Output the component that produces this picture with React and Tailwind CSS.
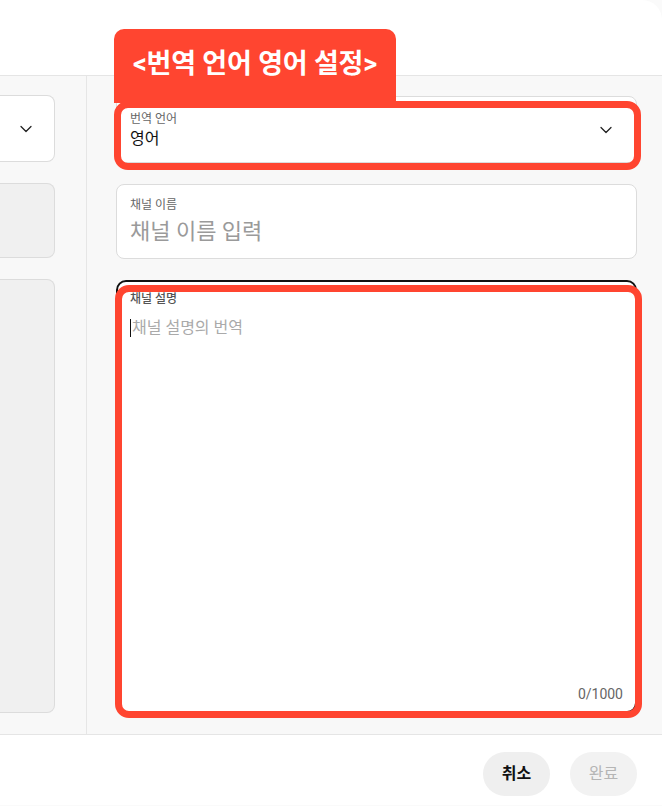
import { ChevronDown } from "lucide-react";

const font = { fontFamily: "Roboto, 'Noto Sans CJK KR', sans-serif" };

// 주석용 빨간 테두리 박스
const Highlight = ({ className }) => (
  <div
    className={`pointer-events-none absolute rounded-[14px] border-[7px] border-[#ff4530] ${className}`}
  />
);

const App = () => {
  return (
    <div className="relative h-[806px] w-[662px] overflow-hidden bg-[#fafafa]" style={font}>
      {/* 상단 헤더 영역 */}
      <div className="h-[76px] rounded-tr-[20px] border-b border-[#e5e5e5] bg-white" />

      {/* 본문: 원문 / 번역 두 컬럼 */}
      <div className="flex h-[659px] border-b border-[#e5e5e5] bg-[#f8f8f8]">
        {/* 원문 컬럼 (잘려 보이는 부분) */}
        <div className="flex w-[87px] shrink-0 flex-col gap-[21px] border-r border-[#e6e6e6] pr-[31px] pt-[19px] pb-[21px]">
          <div className="flex h-[67px] items-center justify-end rounded-r-lg border border-l-0 border-[#dcdcdc] bg-white pr-[18px]">
            <ChevronDown size={20} strokeWidth={1.5} className="text-[#222]" />
          </div>
          <div className="h-[75px] rounded-r-lg border border-l-0 border-[#dcdcdc] bg-[#f0f0f0]" />
          <div className="flex-1 rounded-r-lg border border-l-0 border-[#dcdcdc] bg-[#f0f0f0]" />
        </div>

        {/* 번역 컬럼 */}
        <div className="flex flex-1 flex-col gap-[21px] pl-[29px] pr-[25px] pt-[20px] pb-[21px]">
          <div className="relative flex h-[67px] items-center justify-between rounded-lg border border-[#dcdcdc] bg-white pl-[13px] pr-[20px]">
            <div className="pt-[1px]">
              <div className="text-[12px] leading-[16px] text-[#666]">번역 언어</div>
              <div className="mt-[1px] text-[16px] leading-[22px] text-[#111]">영어</div>
            </div>
            <ChevronDown size={20} strokeWidth={1.5} className="text-[#222]" />
            <Highlight className="-left-[3px] top-[4px] -right-[5px] -bottom-[8px]" />
          </div>

          <div className="flex h-[75px] flex-col justify-center rounded-lg border border-[#dcdcdc] bg-white px-[13px]">
            <div className="text-[12px] leading-[16px] text-[#666]">채널 이름</div>
            <div className="mt-[4px] text-[22px] leading-[30px] text-[#9a9a9a]">채널 이름 입력</div>
          </div>

          <div className="relative flex flex-1 flex-col rounded-[10px] border-2 border-[#111] bg-white px-[12px] pt-[9px] pb-[10px]">
            <div className="text-[12px] font-medium leading-[16px] text-[#555]">채널 설명</div>
            <div className="mt-[10px] flex items-center text-[16px] leading-[22px] text-[#aaa]">
              <span className="mr-[1px] inline-block h-[18px] w-[1px] bg-[#111]" />
              채널 설명의 번역
            </div>
            <div className="mt-auto -mb-[2px] self-end text-[14px] leading-[18px] text-[#666]">0/1000</div>
            <Highlight className="-left-[3px] top-[3px] -right-[7px] -bottom-[7px]" />
          </div>
        </div>
      </div>

      {/* 하단 버튼 */}
      <div className="flex h-[70px] items-center justify-end gap-[20px] bg-white pr-[25px] pt-[8px]">
        <button className="h-[44px] w-[67px] rounded-full bg-[#efefef] text-[16px] font-bold text-[#111]">
          취소
        </button>
        <button disabled className="h-[44px] w-[67px] rounded-full bg-[#f2f2f2] text-[16px] text-[#b5b5b5]">
          완료
        </button>
      </div>

      {/* 설명 라벨 */}
      <div className="absolute left-[114px] top-[29px] flex h-[74px] w-[282px] items-start justify-center rounded-t-[10px] bg-[#ff4530] pt-[17px]">
        <span className="text-[27px] font-bold leading-[36px] tracking-[-0.2px] text-white">
          &lt;번역 언어 영어 설정&gt;
        </span>
      </div>
    </div>
  );
};

export default App;
